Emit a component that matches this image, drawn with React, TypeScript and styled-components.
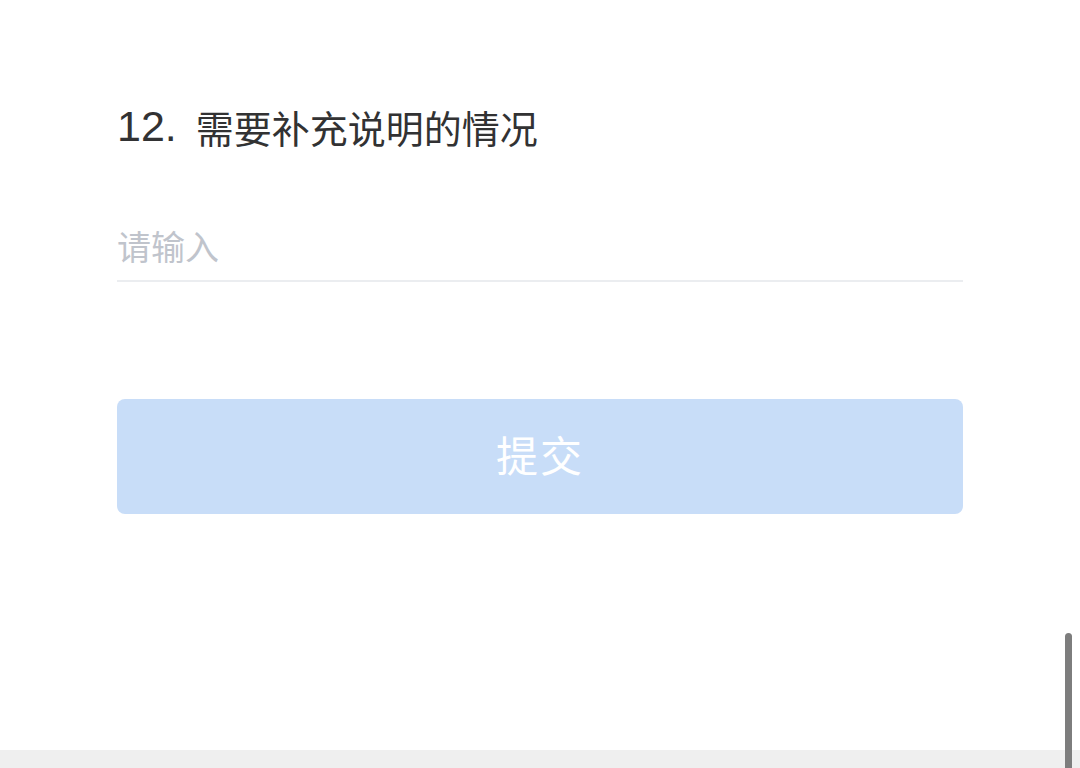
import React from "react";
import styled, { createGlobalStyle } from "styled-components";

const Global = createGlobalStyle`
  html, body { margin: 0; padding: 0; background: #ffffff; }
  body { font-family: "Noto Sans CJK SC", "Liberation Sans", sans-serif; overflow: hidden; }
  * { box-sizing: border-box; }
`;

const Page = styled.div`
  position: relative;
  width: 1080px;
  height: 768px;
  display: flex;
  flex-direction: column;
  background: #ffffff;
  overflow: hidden;
`;

const Content = styled.div`
  flex: 1;
  display: flex;
  flex-direction: column;
  padding: 97px 117px 0 117px;
`;

const Title = styled.h2`
  margin: 0;
  display: flex;
  align-items: center;
  height: 58px;
  font-weight: 400;
  font-size: 38px;
  color: #323233;
`;

const Num = styled.span`
  font-family: "Liberation Sans", "Noto Sans", sans-serif;
  font-size: 43px;
  margin-right: 19px;
`;

const Field = styled.input`
  margin-top: 65px;
  height: 62px;
  border: none;
  border-bottom: 2px solid #ebedf0;
  outline: none;
  padding: 0 0 10px 0;
  font-family: "Noto Sans CJK SC", sans-serif;
  font-size: 34px;
  color: #323233;
  background: transparent;
  &::placeholder { color: #c0c4cc; }
`;

const Submit = styled.button`
  margin-top: 117px;
  height: 115px;
  padding: 0 0 6px 0;
  border: none;
  border-radius: 8px;
  background: #c8ddf8;
  color: #ffffff;
  font-family: "Noto Sans CJK SC", sans-serif;
  font-size: 42px;
  letter-spacing: 2px;
`;

const BottomBar = styled.div`
  height: 18px;
  background: #efefef;
`;

const ScrollThumb = styled.div`
  position: absolute;
  left: 1065px;
  top: 633px;
  width: 7px;
  height: 150px;
  border-radius: 4px;
  background: #7d7d7d;
`;

export default function App() {
  return (
    <Page>
      <Global />
      <Content>
        <Title>
          <Num>12.</Num>需要补充说明的情况
        </Title>
        <Field placeholder="请输入" />
        <Submit>提交</Submit>
      </Content>
      <BottomBar />
      <ScrollThumb />
    </Page>
  );
}
